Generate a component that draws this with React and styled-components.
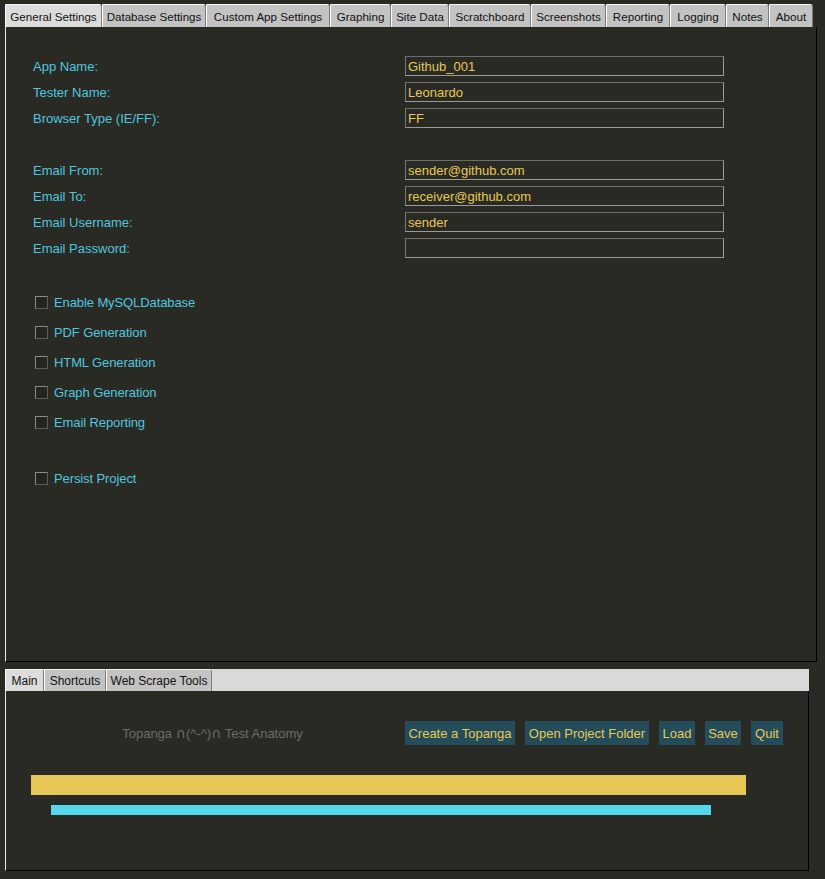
import React from "react";
import styled, { createGlobalStyle } from "styled-components";

const BG = "#2a2a25";
const CYAN = "#4fc6df";
const YELLOW = "#e6c956";

const Global = createGlobalStyle`
  html, body { margin: 0; padding: 0; background: ${BG}; }
  body { font-family: "Liberation Sans", Arial, sans-serif; }
  * { box-sizing: border-box; }
`;

const Page = styled.div`
  width: 825px;
  height: 879px;
  padding: 4px 0 0 5px;
  display: flex;
  flex-direction: column;
  background: ${BG};
  overflow: hidden;
`;

const Notebook = styled.div`
  width: ${(p) => p.$w}px;
  display: flex;
  flex-direction: column;
`;

const TabBar = styled.div`
  display: flex;
  align-items: flex-end;
  height: ${(p) => p.$h}px;
  background: ${(p) => (p.$fill ? "#d9d9d9" : "transparent")};
`;

const Tab = styled.div`
  width: ${(p) => p.$w}px;
  height: 100%;
  display: flex;
  align-items: center;
  justify-content: center;
  font-size: ${(p) => p.$fs || 12}px;
  color: #111;
  white-space: nowrap;
  background: ${(p) => (p.$active ? "#dcdcdc" : "#c3c3c3")};
  border-top: 1px solid #f4f4f4;
  border-left: 1px solid #fbfbfb;
  border-right: 1px solid #7c7c7c;
  border-top-right-radius: 3px;
  padding-top: 1px;
`;

const Panel = styled.div`
  height: ${(p) => p.$h}px;
  border-left: 1px solid #e8e8e8;
  border-right: 1px solid #000;
  border-bottom: 1px solid #000;
  display: flex;
  flex-direction: column;
`;

const SettingsBody = styled.div`
  padding: 29px 0 0 27px;
  display: flex;
  flex-direction: column;
`;

const Form = styled.div`
  display: flex;
  flex-direction: column;
  gap: 6px;
`;

const FieldRow = styled.div`
  display: flex;
  align-items: center;
  height: 20px;
`;

const Label = styled.div`
  width: 372px;
  font-size: 13px;
  color: ${CYAN};
`;

const Field = styled.div`
  width: 319px;
  height: 20px;
  border: 1px solid #9a9a96;
  border-top-color: #6c6c68;
  border-left-color: #7a7a76;
  padding: 0 2px;
  display: flex;
  align-items: center;
  font-size: 13px;
  color: ${YELLOW};
  background: ${BG};
`;

const Spacer = styled.div`
  height: ${(p) => p.$h}px;
`;

const Checks = styled.div`
  margin-top: 29px;
  display: flex;
  flex-direction: column;
`;

const CheckRow = styled.label`
  height: 30px;
  display: flex;
  align-items: center;
  gap: 6px;
  padding-left: 2px;
  font-size: 13px;
  letter-spacing: -0.1px;
  color: ${CYAN};
`;

const Box = styled.span`
  width: 13px;
  height: 13px;
  border: 1px solid #8a8a86;
  border-bottom-color: #5c5c58;
  border-right-color: #5c5c58;
  background: #252520;
`;

const Gap = styled.div`
  height: 7px;
  flex: none;
`;

const MainBody = styled.div`
  padding-top: 30px;
  display: flex;
  flex-direction: column;
`;

const ActionRow = styled.div`
  display: flex;
  align-items: center;
  height: 24px;
`;

const Caption = styled.div`
  width: 399px;
  padding-left: 14px;
  text-align: center;
  font-size: 13px;
  color: #6c6c68;
`;

const Cap = styled.span`
  font-family: "DejaVu Sans", sans-serif;
  font-size: 14px;
  line-height: 1;
`;

const Buttons = styled.div`
  display: flex;
  gap: 10px;
`;

const Button = styled.button`
  width: ${(p) => p.$w}px;
  height: 24px;
  padding: 0;
  border: none;
  background: #254c5a;
  color: ${YELLOW};
  font-family: "Liberation Sans", Arial, sans-serif;
  font-size: 13px;
  white-space: nowrap;
  cursor: pointer;
`;

const Bar = styled.div`
  height: ${(p) => p.$h}px;
  margin-left: ${(p) => p.$x}px;
  margin-top: ${(p) => p.$t}px;
  background: ${(p) => p.$c};
`;

const topTabs = [
  ["General Settings", 97],
  ["Database Settings", 104],
  ["Custom App Settings", 124],
  ["Graphing", 61],
  ["Site Data", 58],
  ["Scratchboard", 82],
  ["Screenshots", 75],
  ["Reporting", 64],
  ["Logging", 56],
  ["Notes", 43],
  ["About", 44],
];

const bottomTabs = [
  ["Main", 39],
  ["Shortcuts", 62],
  ["Web Scrape Tools", 106],
];

const fields1 = [
  ["App Name:", "Github_001"],
  ["Tester Name:", "Leonardo"],
  ["Browser Type (IE/FF):", "FF"],
];
const fields2 = [
  ["Email From:", "sender@github.com"],
  ["Email To:", "receiver@github.com"],
  ["Email Username:", "sender"],
  ["Email Password:", ""],
];

const checks = [
  "Enable MySQLDatabase",
  "PDF Generation",
  "HTML Generation",
  "Graph Generation",
  "Email Reporting",
];

const buttons = [
  ["Create a Topanga", 110],
  ["Open Project Folder", 124],
  ["Load", 36],
  ["Save", 36],
  ["Quit", 32],
];

export default function App() {
  return (
    <>
      <Global />
      <Page>
        <Notebook $w={812}>
          <TabBar $h={23}>
            {topTabs.map(([t, w], i) => (
              <Tab key={t} $w={w} $fs={11.6} $active={i === 0}>
                {t}
              </Tab>
            ))}
          </TabBar>
          <Panel $h={635}>
            <SettingsBody>
              <Form>
                {fields1.map(([l, v]) => (
                  <FieldRow key={l}>
                    <Label>{l}</Label>
                    <Field>{v}</Field>
                  </FieldRow>
                ))}
                <Spacer $h={20} />
                {fields2.map(([l, v]) => (
                  <FieldRow key={l}>
                    <Label>{l}</Label>
                    <Field>{v}</Field>
                  </FieldRow>
                ))}
              </Form>
              <Checks>
                {checks.map((c) => (
                  <CheckRow key={c}>
                    <Box />
                    {c}
                  </CheckRow>
                ))}
                <Spacer $h={26} />
                <CheckRow>
                  <Box />
                  Persist Project
                </CheckRow>
              </Checks>
            </SettingsBody>
          </Panel>
        </Notebook>
        <Gap />
        <Notebook $w={804}>
          <TabBar $h={22} $fill>
            {bottomTabs.map(([t, w], i) => (
              <Tab key={t} $w={w} $active={i === 0}>
                {t}
              </Tab>
            ))}
          </TabBar>
          <Panel $h={180}>
            <MainBody>
              <ActionRow>
                <Caption>
                  Topanga <Cap>∩</Cap>(^-^)<Cap>∩</Cap> Test Anatomy
                </Caption>
                <Buttons>
                  {buttons.map(([b, w]) => (
                    <Button key={b} $w={w}>
                      {b}
                    </Button>
                  ))}
                </Buttons>
              </ActionRow>
              <Bar $h={20} $x={25} $t={30} $c="#e6c756" style={{ width: 715 }} />
              <Bar $h={10} $x={45} $t={10} $c="#56d8ec" style={{ width: 660 }} />
            </MainBody>
          </Panel>
        </Notebook>
      </Page>
    </>
  );
}
